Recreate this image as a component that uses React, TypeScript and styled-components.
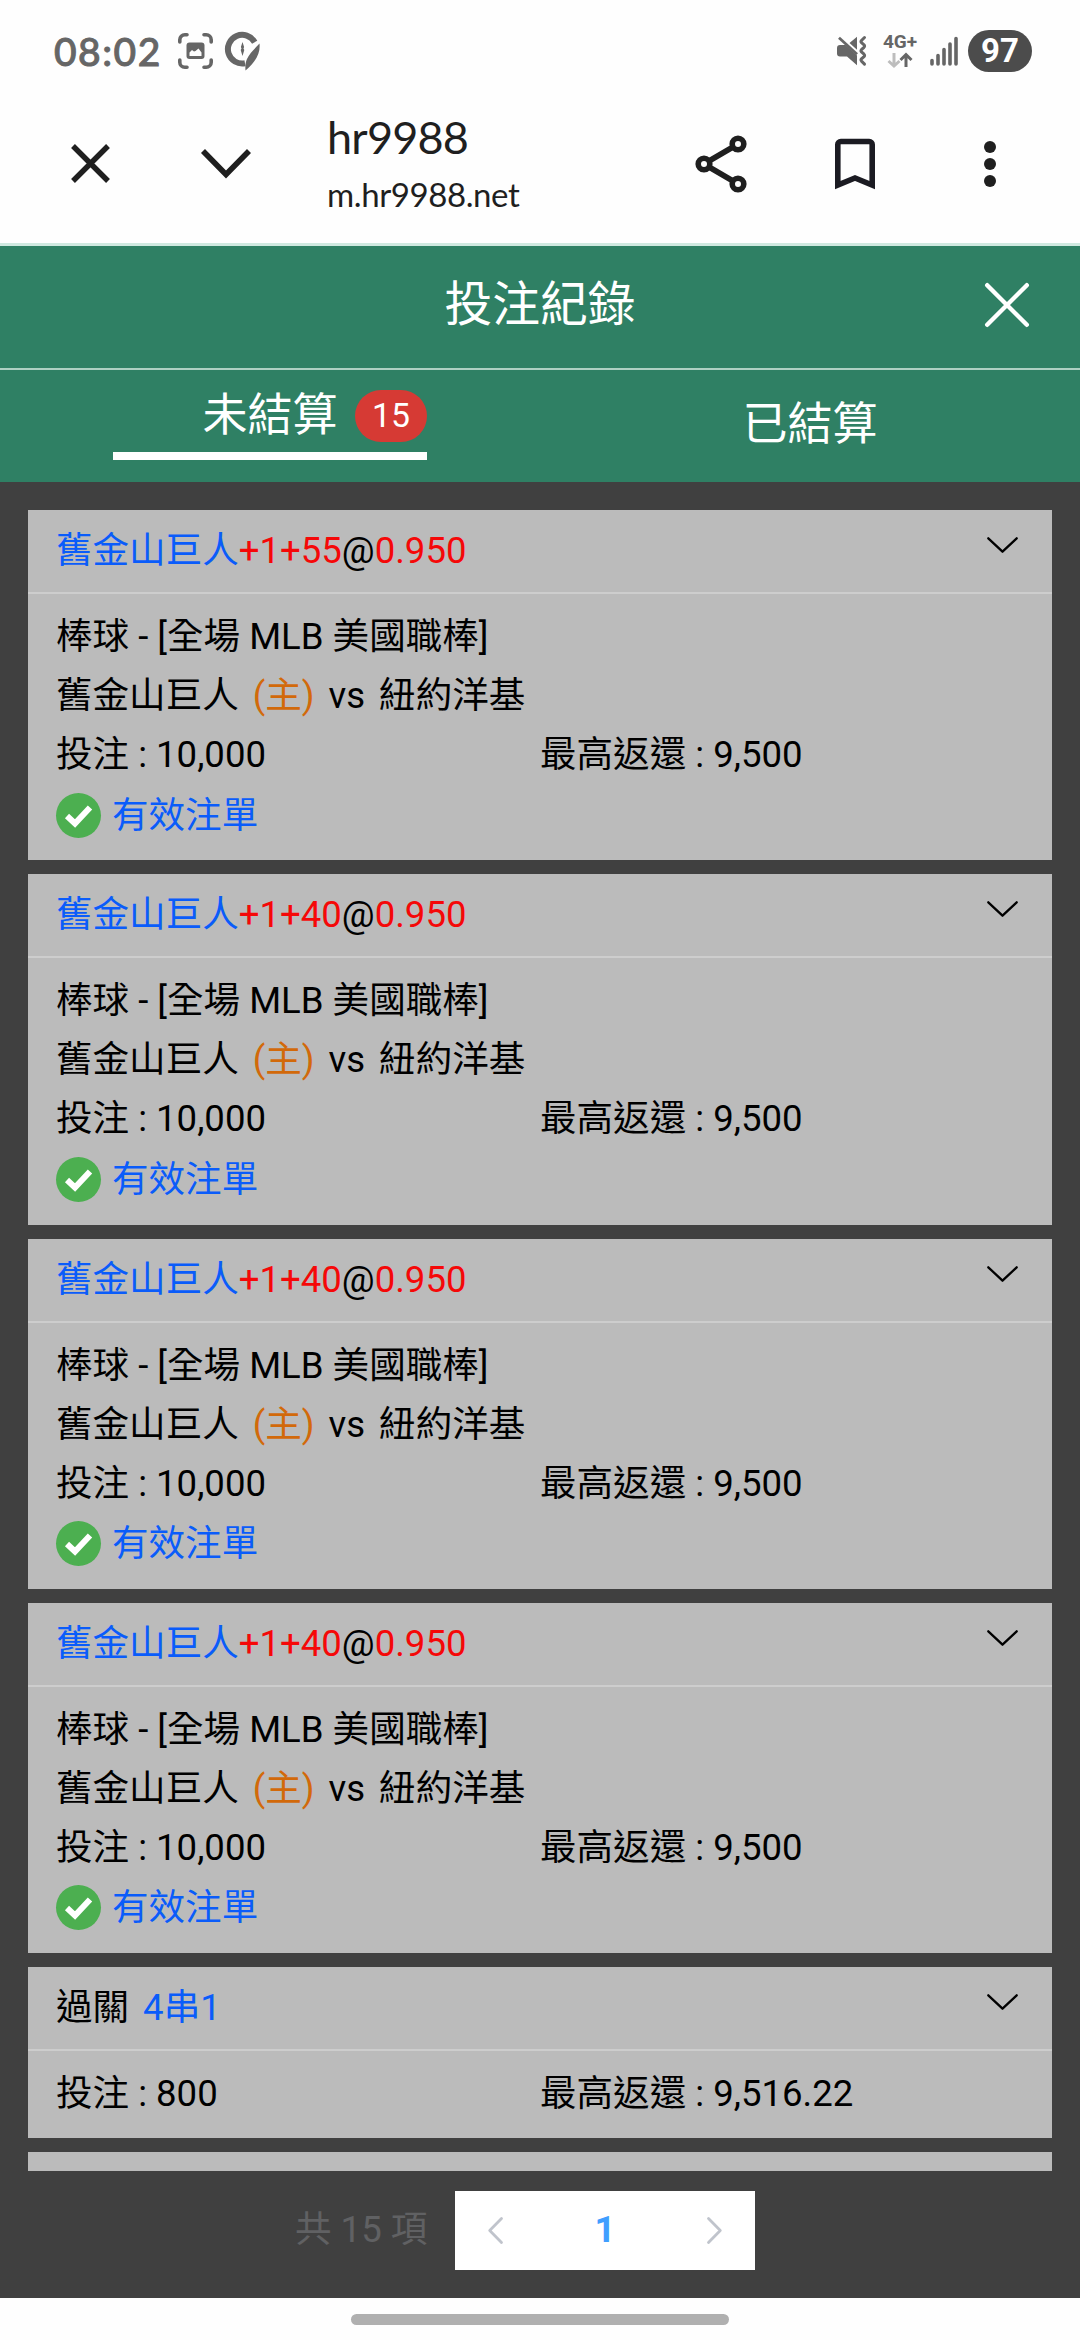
import React from "react";
import styled, { createGlobalStyle } from "styled-components";

const sans = `Roboto, "Noto Sans CJK TC", sans-serif`;

const GlobalStyle = createGlobalStyle`
  *, *::before, *::after { box-sizing: border-box; }
  body { margin: 0; background: #fff; font-family: ${sans}; }
  svg { display: block; flex: none; overflow: visible; }
`;

const Screen = styled.div`
  display: flex;
  flex-direction: column;
  width: 1080px;
  height: 2340px;
  overflow: hidden;
  background: #fefefe;
`;

const StatusBar = styled.div`
  display: flex;
  align-items: center;
  justify-content: space-between;
  height: 102px;
  padding: 0 48px 0 54px;
  color: #666;
`;

const StatusGroup = styled.div<{ $gap: number }>`
  display: flex;
  align-items: center;
  gap: ${(p) => p.$gap}px;
`;

const Clock = styled.span`
  width: 112px;
  font: 500 39px/46px Lato, sans-serif;
  -webkit-text-stroke: 0.9px #666;
  letter-spacing: 1.5px;
  white-space: nowrap;
`;

const Network = styled.div`
  display: flex;
  flex-direction: column;
  align-items: center;
  gap: 3px;
  width: 34px;
  margin: 0 1px 0 4px;
  font: 700 19px/16px Roboto, sans-serif;
`;

const Battery = styled.div`
  display: flex;
  align-items: center;
  justify-content: center;
  width: 64px;
  height: 42px;
  margin-left: -2px;
  border-radius: 21px;
  background: #4c4c4c;
  color: #fff;
  font: 700 33px/42px Roboto, sans-serif;
`;

const Toolbar = styled.div`
  display: flex;
  align-items: center;
  height: 141px;
  padding: 0 84px 18px 71px;
  color: #1f1f1f;
`;

const PageInfo = styled.div`
  display: flex;
  flex-direction: column;
  flex: 1;
  margin-left: 76px;
  padding-top: 8px;
  font-family: Lato, sans-serif;
  white-space: nowrap;
`;

const PageTitle = styled.div`
  font-size: 45px;
  line-height: 54px;
  letter-spacing: -0.8px;
`;

const PageHost = styled.div`
  font-size: 33px;
  line-height: 61px;
  letter-spacing: -0.4px;
`;

const ToolbarActions = styled.div`
  display: flex;
  align-items: center;
`;

const Action = styled.button<{ $left?: number }>`
  display: flex;
  padding: 0;
  margin: 0 0 0 ${(p) => p.$left ?? 0}px;
  border: 0;
  background: none;
  color: inherit;
`;

const Header = styled.header`
  display: grid;
  grid-template-columns: 1fr auto 1fr;
  align-items: center;
  height: 127px;
  padding: 0 51px 5px;
  border-top: 3px solid #cfe9e0;
  border-bottom: 2px solid #aed0c3;
  background: #2f8064;
  color: #fff;
`;

const HeaderTitle = styled.h1`
  grid-column: 2;
  margin: 0;
  font-size: 47.8px;
  font-weight: 400;
  line-height: 60px;
`;

const HeaderClose = styled(Action)`
  justify-self: end;
`;

const Tabs = styled.nav`
  display: grid;
  grid-template-columns: 1fr 1fr;
  justify-items: center;
  align-items: start;
  height: 112px;
  background: #2f8064;
  color: #fff;
`;

const Tab = styled.div<{ $active?: boolean }>`
  position: relative;
  width: 314px;
  height: ${(p) => (p.$active ? 90 : 109)}px;
  line-height: ${(p) => (p.$active ? 91 : 109)}px;
  border-bottom: ${(p) => (p.$active ? "8px solid #fff" : "0")};
  font-size: 45px;
  text-align: center;
`;

const Badge = styled.span`
  position: absolute;
  top: 20px;
  right: 0;
  width: 72px;
  height: 52px;
  border-radius: 26px;
  background: #d63a34;
  font-size: 33.75px;
  line-height: 51px;
`;

const List = styled.main`
  display: flex;
  flex-direction: column;
  gap: 14px;
  height: 1689px;
  padding: 28px 28px 0;
  overflow: hidden;
  background: #404040;
`;

const Card = styled.section`
  flex: none;
  background: #bbb;
  color: #000;
  font-size: 36.56px;
`;

const CardHead = styled.div`
  display: flex;
  justify-content: space-between;
  height: 84px;
  padding: 0 34px 0 28px;
  border-bottom: 2px solid #cdcdcd;
  line-height: 81px;
`;

const HeadText = styled.div`
  white-space: pre;
`;

const HeadChevron = styled.div`
  padding-top: 27px;
`;

const CardBody = styled.div`
  padding: 13px 28px 15px;
`;

const Row = styled.div<{ $gap?: number }>`
  display: flex;
  gap: ${(p) => p.$gap ?? 0}px;
  height: 59px;
  line-height: 59px;
  white-space: pre;
`;

const Half = styled.span`
  flex: 1;
`;

const StatusRow = styled(Row)`
  align-items: center;
  height: 61.25px;
  padding-top: 1px;
  line-height: 59px;
`;

const Tone = styled.span<{ $c: "blue" | "red" | "orange"; $left?: number }>`
  margin-left: ${(p) => p.$left ?? 0}px;
  color: ${(p) => ({ blue: "#0a5cfa", red: "#f50808", orange: "#d2690a" })[p.$c]};
`;

const Footer = styled.footer`
  display: flex;
  align-items: flex-start;
  height: 127px;
  padding: 20px 0 0 295px;
  background: #404040;
  font-size: 36.56px;
  line-height: 77px;
`;

const Total = styled.span`
  width: 160px;
  color: #606163;
  white-space: pre;
`;

const Pager = styled.div`
  display: flex;
  align-items: center;
  justify-content: space-between;
  width: 300px;
  height: 79px;
  padding: 0 33px;
  background: #fff;
  color: #c0c4cc;
`;

const Current = styled.span`
  padding-bottom: 2px;
  color: #409eff;
  font-weight: 700;
`;

const HomeArea = styled.div`
  flex: 1;
  display: flex;
  justify-content: center;
  padding-top: 16px;
`;

const HomeHandle = styled.div`
  width: 378px;
  height: 11px;
  border-radius: 6px;
  background: #b0b0b0;
`;

const ScreenshotIcon = () => (
  <svg width="35" height="36" viewBox="0 0 35 36" fill="none" stroke="currentColor" strokeWidth="3.6" strokeLinecap="round">
    <path d="M1.8 9V6.8a5 5 0 0 1 5-5H9M26 1.8h2.200a5 5 0 0 1 5 5V9M33.200 27v2.200a5 5 0 0 1-5 5H26M9 34.200H6.800a5 5 0 0 1-5-5V27" />
    <rect x="8.500" y="9.500" width="18" height="16.500" rx="3" fill="currentColor" stroke="none" />
    <path d="M11.500 23v-3.500l2.500-2.500 2 1.500 1.500-.5 3-2.500 3 4V23z" fill="#fefefe" stroke="none" />
  </svg>
);

const CompassIcon = () => (
  <svg width="35" height="40" viewBox="0 0 35 40" fill="none" stroke="currentColor">
    <path d="M29.700 11.200A14.300 14.300 0 1 0 20 32.200" strokeWidth="6" />
    <path d="M34.500 12.500c1 9-2.500 17-14 27-.5-5 .2-8.500 1.500-11.500 2.500-5.500 7-9.500 12.500-15.500z" fill="currentColor" stroke="none" />
    <path d="M17.500 11l1.600 5-.6 1.500.8 1.500-1.800 6-1.800-6 .8-1.500-.6-1.500z" fill="currentColor" stroke="none" />
  </svg>
);

const MuteIcon = () => (
  <svg width="30" height="30" viewBox="0 0 30 30" fill="none" stroke="currentColor">
    <path d="M12.500 7L20 .8v13z M3 9h5.500L20 19.500v9.800L10 20.500H3a3 3 0 0 1-3-3V12a3 3 0 0 1 3-3z" fill="currentColor" stroke="none" />
    <path d="M2 1.800L20 18.200" strokeWidth="2.800" />
    <path d="M27.500 1.500L24.500 4.500q-1 1.200 0 2.200l2.500 2.200q1.200 1.200 0 2.400l-2.500 2.300q-1 1.200 0 2.300l2.500 2.300q1.200 1.200 0 2.400l-2.500 2.200q-1 1.200 0 2.300l3 3" strokeWidth="3" strokeLinecap="round" />
  </svg>
);

const DataArrows = () => (
  <svg width="26" height="15" viewBox="0 0 26 15" fill="none" strokeWidth="3">
    <path d="M7 0v13M1.500 8l5.500 5 5.500-5" stroke="#bdbdbd" />
    <path d="M19 14V1.500M13.500 7L19 1.500 24.500 7" stroke="currentColor" />
  </svg>
);

const SignalIcon = () => (
  <svg width="28" height="30" viewBox="0 0 28 30" stroke="currentColor" strokeWidth="3.600" strokeLinecap="round">
    <path d="M2 24.500V28M8 19.500V28M14 13.500V28M20 8v20M26 2.500V28" />
  </svg>
);

const CloseIcon = () => (
  <svg width="39" height="39" viewBox="0 0 39 39" stroke="currentColor" strokeWidth="5.400">
    <path d="M2 2l35 35M37 2L2 37" />
  </svg>
);

const DownIcon = () => (
  <svg width="50" height="30" viewBox="0 0 50 30" fill="none" stroke="currentColor" strokeWidth="5.600">
    <path d="M2 2l23 23.500L48 2" />
  </svg>
);

const ShareIcon = () => (
  <svg width="52" height="58" viewBox="0 0 52 58" fill="none" stroke="currentColor" strokeWidth="5.600">
    <circle cx="9" cy="29" r="5.800" />
    <circle cx="43" cy="9" r="5.800" />
    <circle cx="43" cy="49" r="5.800" />
    <path d="M14 26l24-14M14 32l24 14" />
  </svg>
);

const BookmarkIcon = () => (
  <svg width="40" height="52" viewBox="0 0 40 52" fill="none" stroke="#1b1b22" strokeWidth="5.600">
    <path d="M2.800 47V6.500a3 3 0 0 1 3-3h28.400a3 3 0 0 1 3 3V47L20 40z" />
  </svg>
);

const MoreIcon = () => (
  <svg width="12" height="48" viewBox="0 0 12 48" fill="currentColor">
    <circle cx="6" cy="7" r="6" />
    <circle cx="6" cy="24" r="6" />
    <circle cx="6" cy="41" r="6" />
  </svg>
);

const HeaderCloseIcon = () => (
  <svg width="44" height="44" viewBox="0 0 44 44" stroke="currentColor" strokeWidth="4.400" strokeLinecap="round">
    <path d="M2.200 2.200l39.600 39.600M41.800 2.200L2.200 41.800" />
  </svg>
);

const ThinChevron = () => (
  <svg width="31" height="16" viewBox="0 0 31 16" fill="none" stroke="#000" strokeWidth="2.300" strokeLinecap="round" strokeLinejoin="round">
    <path d="M1.300 1.300L15.500 14.700 29.700 1.300" />
  </svg>
);

const CheckIcon = () => (
  <svg width="45" height="45" viewBox="0 0 45 45">
    <circle cx="22.500" cy="22.500" r="22.500" fill="#4caf50" />
    <path d="M11 23l8 7.500L34 14.500" fill="none" stroke="#fff" strokeWidth="6" />
  </svg>
);

const PagerArrow = ({ next }: { next?: boolean }) => (
  <svg width="15" height="27" viewBox="0 0 15 27" fill="none" stroke="currentColor" strokeWidth="2.800" strokeLinecap="round" strokeLinejoin="round">
    <path d={next ? "M1.500 1.500l11.800 12-11.800 12" : "M13.500 1.500l-11.800 12 11.800 12"} />
  </svg>
);

const Amounts = ({ stake, payout }: { stake: string; payout: string }) => (
  <Row>
    <Half>投注 : {stake}</Half>
    <Half>最高返還 : {payout}</Half>
  </Row>
);

const BetCard = ({ line }: { line: string }) => (
  <Card>
    <CardHead>
      <HeadText>
        <Tone $c="blue">舊金山巨人</Tone>
        <Tone $c="red">{line}</Tone>@<Tone $c="red">0.950</Tone>
      </HeadText>
      <HeadChevron>
        <ThinChevron />
      </HeadChevron>
    </CardHead>
    <CardBody>
      <Row>棒球 - [全場 MLB 美國職棒]</Row>
      <Row $gap={14}>
        <span>舊金山巨人</span>
        <Tone $c="orange">(主)</Tone>
        <span>vs</span>
        <span>紐約洋基</span>
      </Row>
      <Amounts stake="10,000" payout="9,500" />
      <StatusRow $gap={11}>
        <CheckIcon />
        <Tone $c="blue">有效注單</Tone>
      </StatusRow>
    </CardBody>
  </Card>
);

const ParlayCard = () => (
  <Card>
    <CardHead>
      <HeadText>
        過關<Tone $c="blue" $left={14}>4串1</Tone>
      </HeadText>
      <HeadChevron>
        <ThinChevron />
      </HeadChevron>
    </CardHead>
    <CardBody>
      <Amounts stake="800" payout="9,516.22" />
    </CardBody>
  </Card>
);

const EmptyCard = styled(Card)`
  height: 84px;
`;

const bets = ["+1+55", "+1+40", "+1+40", "+1+40"];

export default function App() {
  return (
    <Screen>
      <GlobalStyle />
      <StatusBar>
        <StatusGroup $gap={12}>
          <Clock>08:02</Clock>
          <ScreenshotIcon />
          <CompassIcon />
        </StatusGroup>
        <StatusGroup $gap={12}>
          <MuteIcon />
          <Network>
            <span>4G+</span>
            <DataArrows />
          </Network>
          <SignalIcon />
          <Battery>97</Battery>
        </StatusGroup>
      </StatusBar>
      <Toolbar>
        <Action>
          <CloseIcon />
        </Action>
        <Action $left={91}>
          <DownIcon />
        </Action>
        <PageInfo>
          <PageTitle>hr9988</PageTitle>
          <PageHost>m.hr9988.net</PageHost>
        </PageInfo>
        <ToolbarActions>
          <Action>
            <ShareIcon />
          </Action>
          <Action $left={88}>
            <BookmarkIcon />
          </Action>
          <Action $left={109}>
            <MoreIcon />
          </Action>
        </ToolbarActions>
      </Toolbar>
      <Header>
        <HeaderTitle>投注紀錄</HeaderTitle>
        <HeaderClose>
          <HeaderCloseIcon />
        </HeaderClose>
      </Header>
      <Tabs>
        <Tab $active>
          未結算<Badge>15</Badge>
        </Tab>
        <Tab>已結算</Tab>
      </Tabs>
      <List>
        {bets.map((line, i) => (
          <BetCard key={i} line={line} />
        ))}
        <ParlayCard />
        <EmptyCard />
      </List>
      <Footer>
        <Total>共 15 項</Total>
        <Pager>
          <PagerArrow />
          <Current>1</Current>
          <PagerArrow next />
        </Pager>
      </Footer>
      <HomeArea>
        <HomeHandle />
      </HomeArea>
    </Screen>
  );
}
